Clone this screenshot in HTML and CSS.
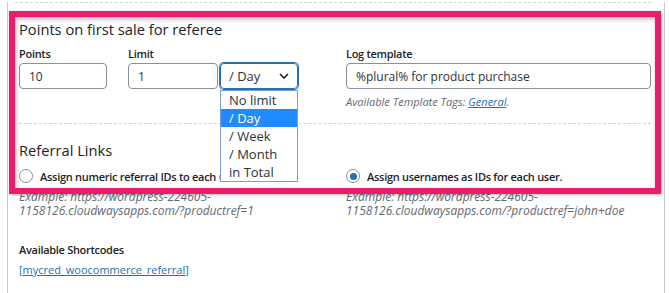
FILE: index.html
```html
<!DOCTYPE html>
<html lang="en">
  <head>
    <meta charset="UTF-8">
    <meta name="viewport" content="width=device-width, initial-scale=1.0">
    <title>Referral hook settings</title>
    <link rel="stylesheet" href="styles.css">
  </head>

  <body>

    <div class="page">
      <div class="rule rule-top"></div>

      <section class="hook">
        <h3 class="hook-title">Points on first sale for referee</h3>
        <div class="fields">
          <div class="fields-left">
            <div class="field field-points">
              <label>Points</label>
              <input class="input" type="text" value="10">
            </div>
            <div class="field">
              <label>Limit</label>
              <div class="limit-row">
                <input class="input input-limit" type="text" value="1">
                <div class="select">
                  <span>/ Day</span>
                  <svg class="chevron" width="10" height="6" viewBox="0 0 10 6"><path d="M1 1l4 4 4-4" fill="none" stroke="#1d2327" stroke-width="1.6"/></svg>
                  <ul class="select-menu">
                    <li>No limit</li>
                    <li class="is-active">/ Day</li>
                    <li>/ Week</li>
                    <li>/ Month</li>
                    <li>in Total</li>
                  </ul>
                </div>
              </div>
            </div>
          </div>
          <div class="field">
            <label>Log template</label>
            <input class="input input-log" type="text" value="%plural% for product purchase">
            <p class="hint">Available Template Tags: <a href="#">General</a>.</p>
          </div>
        </div>
      </section>

      <div class="rule"></div>

      <section class="hook">
        <h3 class="hook-title">Referral Links</h3>
        <div class="options">
          <div class="option">
            <label class="radio-row"><input class="radio" type="radio" name="reftype"> Assign numeric referral IDs to each user.</label>
            <p class="example">Example: https://wordpress-224605-<br>1158126.cloudwaysapps.com/?productref=1</p>
          </div>
          <div class="option">
            <label class="radio-row"><input class="radio" type="radio" name="reftype" checked> Assign usernames as IDs for each user.</label>
            <p class="example">Example: https://wordpress-224605-<br>1158126.cloudwaysapps.com/?productref=john+doe</p>
          </div>
        </div>

        <h4 class="shortcodes-title">Available Shortcodes</h4>
        <p class="shortcode">[<a href="#">mycred_woocommerce_referral</a>]</p>
      </section>

      <div class="highlight"></div>
    </div>

  </body>
</html>
```

FILE: styles.css
```css
/* Layout */

html {
  box-sizing: border-box;
}

*,
*::before,
*::after {
  box-sizing: inherit;
}

body {
  margin: 0;
  background: #ffffff;
  color: #1d2327;
  font-family: "Open Sans", "Noto Sans", sans-serif;
  font-size: 12px;
}

.page {
  position: relative;
  width: 658px;
  min-height: 293px;
  margin-left: 7px;
  padding: 0 13px 0 11px;
  border-left: 1px solid #c8c8cb;
  border-right: 1px solid #c8c8cb;
}

.rule {
  margin-top: 13px;
  border-top: 1px dashed #d4d4d7;
}

.rule-top {
  margin: 2px 0 0 -4px;
}

.hook-title {
  margin: 16px 0 0;
  font-size: 14.7px;
  font-weight: 400;
  line-height: 20px;
}

.fields {
  display: grid;
  grid-template-columns: 305px 305px;
  column-gap: 22px;
  margin-top: 7px;
}

.fields-left {
  display: flex;
  gap: 21px;
}

.field label {
  display: block;
  font-size: 11px;
  font-weight: 600;
  letter-spacing: -0.3px;
  line-height: 16px;
  margin-bottom: 1px;
}

.input {
  display: block;
  width: 88px;
  height: 26px;
  margin: 0;
  padding: 0 9px;
  border: 1px solid #8c8f94;
  border-radius: 4px;
  background: #ffffff;
  color: #2c3338;
  font-family: inherit;
  font-size: 12px;
}

.input-limit {
  width: 90px;
}

.input-log {
  width: 305px;
}

.limit-row {
  display: flex;
  gap: 2px;
}

/* Select, shown open */

.select {
  position: relative;
  display: flex;
  align-items: center;
  justify-content: space-between;
  width: 78px;
  height: 26px;
  padding: 0 8px 0 8px;
  border: 1px solid #2271b1;
  border-radius: 4px;
  box-shadow: 0 0 0 1px #2271b1;
  color: #2c3338;
  font-size: 13px;
}

.select-menu {
  position: absolute;
  top: 26px;
  left: -1px;
  z-index: 2;
  width: 78px;
  margin: 0;
  padding: 0;
  list-style: none;
  border: 1px solid #7a9cd8;
  background: #ffffff;
}

.select-menu li {
  height: 18px;
  padding-left: 8px;
  line-height: 18px;
  color: #2c3338;
}

.select-menu li.is-active {
  background: #1f8bff;
  color: #ffffff;
}

.hint {
  margin: 5px 0 0;
  color: #646970;
  font-size: 11px;
  font-style: italic;
  line-height: 16px;
}

.hint a,
.shortcode,
.shortcode a {
  color: #2271b1;
}

/* Referral links */

.options {
  display: grid;
  grid-template-columns: 305px 305px;
  column-gap: 22px;
  margin-top: 8px;
}

.radio-row {
  display: flex;
  align-items: center;
  gap: 7px;
  height: 16px;
  font-size: 11px;
  font-weight: 600;
  letter-spacing: -0.28px;
  white-space: nowrap;
}

.radio {
  appearance: none;
  position: relative;
  flex: none;
  width: 14px;
  height: 14px;
  margin: 0;
  border: 1px solid #8c8f94;
  border-radius: 50%;
  background: #ffffff;
}

.radio:checked::after {
  content: "";
  position: absolute;
  top: 2.5px;
  left: 2.5px;
  width: 7px;
  height: 7px;
  border-radius: 50%;
  background: #2271b1;
}

.example {
  margin: 6px 0 0;
  color: #646970;
  font-style: italic;
  line-height: 14px;
}

.shortcodes-title {
  margin: 24px 0 0;
  font-size: 11px;
  font-weight: 600;
  letter-spacing: -0.3px;
  line-height: 16px;
}

.shortcode {
  margin: 4px 0 0;
  font-size: 11px;
  line-height: 16px;
}

/* Annotation box drawn over the screenshot */

.highlight {
  position: absolute;
  top: 9px;
  left: 1px;
  width: 652px;
  height: 183px;
  border: 6px solid #ec1c6c;
  box-shadow: 1px 1px 3px rgba(0, 0, 0, 0.3), inset 1px 2px 4px rgba(0, 0, 0, 0.3);
  pointer-events: none;
}
```
